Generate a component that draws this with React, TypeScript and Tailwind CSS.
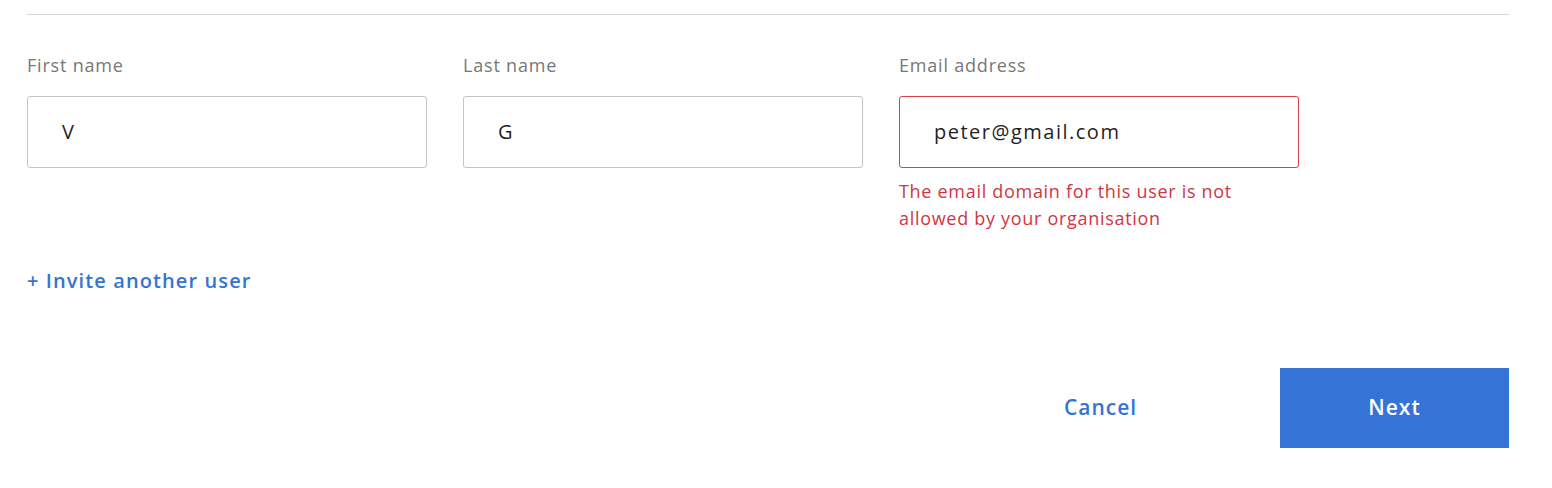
import React from "react";

const font = { fontFamily: '"Open Sans", "Liberation Sans", sans-serif' };

function Field({ label, value, error }: { label: string; value: string; error?: string }) {
  return (
    <div className="w-[400px] flex flex-col">
      <div className="text-[18px] leading-[22px] tracking-[0.8px] text-[#777777] mb-[20px]">{label}</div>
      <div
        className={
          "h-[72px] rounded-[3px] border flex items-center pl-[34px] text-[20px] tracking-[1.5px] text-[#1f1f1f] " +
          (error ? "border-[#d8404a]" : "border-[#c4c4c4]")
        }
      >
        {value}
      </div>
      {error && (
        <div className="mt-[10px] text-[18px] leading-[27px] tracking-[0.7px] text-[#d2353f] w-[380px]">
          {error}
        </div>
      )}
    </div>
  );
}

export default function App() {
  return (
    <div className="w-[1552px] h-[488px] bg-white pl-[27px] pr-[43px]" style={font}>
      <div className="pt-[14px]">
        <div className="h-px bg-[#d6d6d6]" />
      </div>
      <div className="mt-[39px] flex gap-[36px] items-start">
        <Field label="First name" value="V" />
        <Field label="Last name" value="G" />
        <Field
          label="Email address"
          value="peter@gmail.com"
          error="The email domain for this user is not allowed by your organisation"
        />
      </div>
      <div className="mt-[35px] text-[20px] leading-[28px] tracking-[1.1px] font-semibold text-[#3574d6]">
        + Invite another user
      </div>
      <div className="mt-[73px] flex justify-end items-center gap-[65px]">
        <button className="w-[229px] h-[80px] text-[21px] tracking-[1px] font-semibold text-[#3574d6]">
          Cancel
        </button>
        <button className="w-[229px] h-[80px] bg-[#3574d6] text-[21px] tracking-[1px] font-semibold text-white">
          Next
        </button>
      </div>
    </div>
  );
}
